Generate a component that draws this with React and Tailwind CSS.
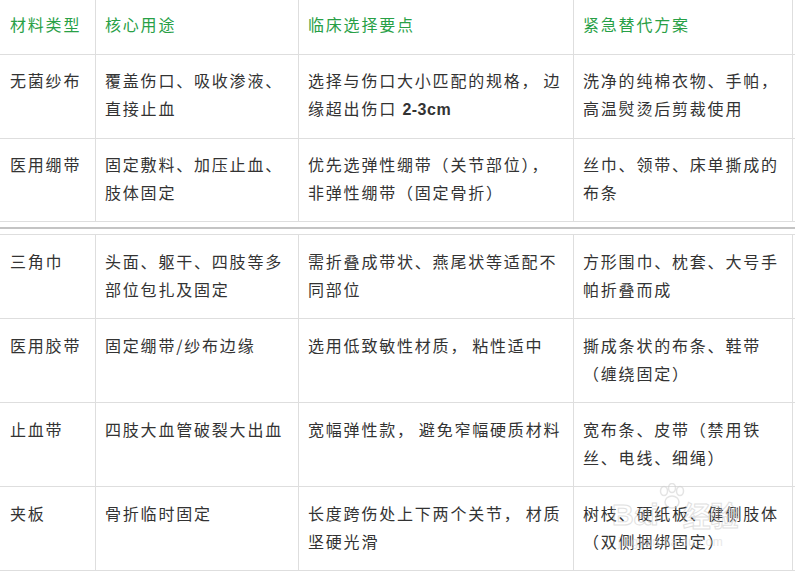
import React from "react";

const C = ({ children }) => <span className="mr-[4px]">{children}</span>;

const table1 = [
  {
    h: "h-[84px]",
    cells: [
      ["无菌纱布"],
      ["覆盖伤口、吸收渗液、", "直接止血"],
      [
        <>选择与伤口大小匹配的规格<C>，</C>边</>,
        <>缘超出伤口 <span className="font-bold tracking-[0.5px] [font-family:'Liberation_Sans',Arial,sans-serif]">2-3cm</span></>,
      ],
      ["洗净的纯棉衣物、手帕，", "高温熨烫后剪裁使用"],
    ],
  },
  {
    h: "h-[83px]",
    cells: [
      ["医用绷带"],
      ["固定敷料、加压止血、", "肢体固定"],
      ["优先选弹性绷带（关节部位），", "非弹性绷带（固定骨折）"],
      ["丝巾、领带、床单撕成的", "布条"],
    ],
  },
];

const table2 = [
  [
    ["三角巾"],
    ["头面、躯干、四肢等多", "部位包扎及固定"],
    ["需折叠成带状、燕尾状等适配不", "同部位"],
    ["方形围巾、枕套、大号手", "帕折叠而成"],
  ],
  [
    ["医用胶带"],
    ["固定绷带/纱布边缘"],
    [<>选用低致敏性材质<C>，</C>粘性适中</>],
    ["撕成条状的布条、鞋带", "（缠绕固定）"],
  ],
  [
    ["止血带"],
    ["四肢大血管破裂大出血"],
    [<>宽幅弹性款<C>，</C>避免窄幅硬质材料</>],
    ["宽布条、皮带（禁用铁", "丝、电线、细绳）"],
  ],
  [
    ["夹板"],
    ["骨折临时固定"],
    [<>长度跨伤处上下两个关节<C>，</C>材质</>, "坚硬光滑"],
    ["树枝、硬纸板、健侧肢体", "（双侧捆绑固定）"],
  ],
];

const cols = "grid grid-cols-[96px_203px_275px_219px]";

function Cell({ lines, i, pt }) {
  return (
    <div className={`border-r border-[#dedede] ${i === 0 ? "pl-[10px]" : "pl-[9px]"} ${pt} whitespace-nowrap`}>
      {lines.map((l, k) => (
        <div key={k}>{l}</div>
      ))}
    </div>
  );
}

function Watermark() {
  return (
    <div className="pointer-events-none absolute left-[612px] top-[483px] flex flex-col items-start opacity-55">
      <div className="flex items-end">
        <span className="pt-[16px] text-[30px] leading-[32px] tracking-[0px] font-bold text-transparent [-webkit-text-stroke:1px_#c8c8c8] [font-family:'Liberation_Sans',Arial,sans-serif]">
          Bai
        </span>
        <svg className="mb-[8px] -ml-[4px]" width="34" height="40" viewBox="0 0 34 40">
          <g fill="none" stroke="#cfcfcf" strokeWidth="1.5">
            <ellipse cx="9" cy="8" rx="3.5" ry="4.5" />
            <ellipse cx="17" cy="5" rx="3.5" ry="4.5" />
            <ellipse cx="25" cy="8" rx="3.5" ry="4.5" />
            <ellipse cx="17" cy="19" rx="7" ry="6" />
          </g>
        </svg>
        <span className="-ml-[6px] text-[28px] leading-[32px] tracking-[0px] font-bold text-transparent [-webkit-text-stroke:1px_#c8c8c8]">
          经验
        </span>
      </div>
      <span className="pl-[6px] pt-[4px] text-[12px] leading-[14px] tracking-[0.5px] text-[#d6d6d6] [font-family:'Liberation_Sans',Arial,sans-serif]">
        jingyan.baidu.com
      </span>
    </div>
  );
}

export default function App() {
  return (
    <div
      className="relative w-[795px] h-[571px] bg-white overflow-hidden text-[#333] text-[16px] leading-[28px] tracking-[1.8px]"
      style={{ fontFamily: "'Noto Sans CJK SC', 'Noto Sans', sans-serif" }}
    >
      {/* top table */}
      <div>
        <div className={`${cols} h-[55px] border-b border-[#dedede] text-[#28a046]`}>
          {["材料类型", "核心用途", "临床选择要点", "紧急替代方案"].map((t, i) => (
            <Cell key={i} lines={[t]} i={i} pt="pt-[10px]" />
          ))}
        </div>
        {table1.map((r, ri) => (
          <div key={ri} className={`${cols} ${r.h} border-b border-[#dedede]`}>
            {r.cells.map((c, i) => (
              <Cell key={i} lines={c} i={i} pt="pt-[11px]" />
            ))}
          </div>
        ))}
      </div>

      {/* seam between screenshots */}
      <div className="pt-[5px] pb-[5px]">
        <div className="h-[2px] bg-[#c4c4c4]" />
      </div>

      {/* bottom table */}
      <div className="border-t border-[#dedede]">
        {table2.map((r, ri) => (
          <div key={ri} className={`${cols} h-[84px] border-b border-[#dedede]`}>
            {r.map((c, i) => (
              <Cell key={i} lines={c} i={i} pt="pt-[12px]" />
            ))}
          </div>
        ))}
      </div>

      <Watermark />
    </div>
  );
}
